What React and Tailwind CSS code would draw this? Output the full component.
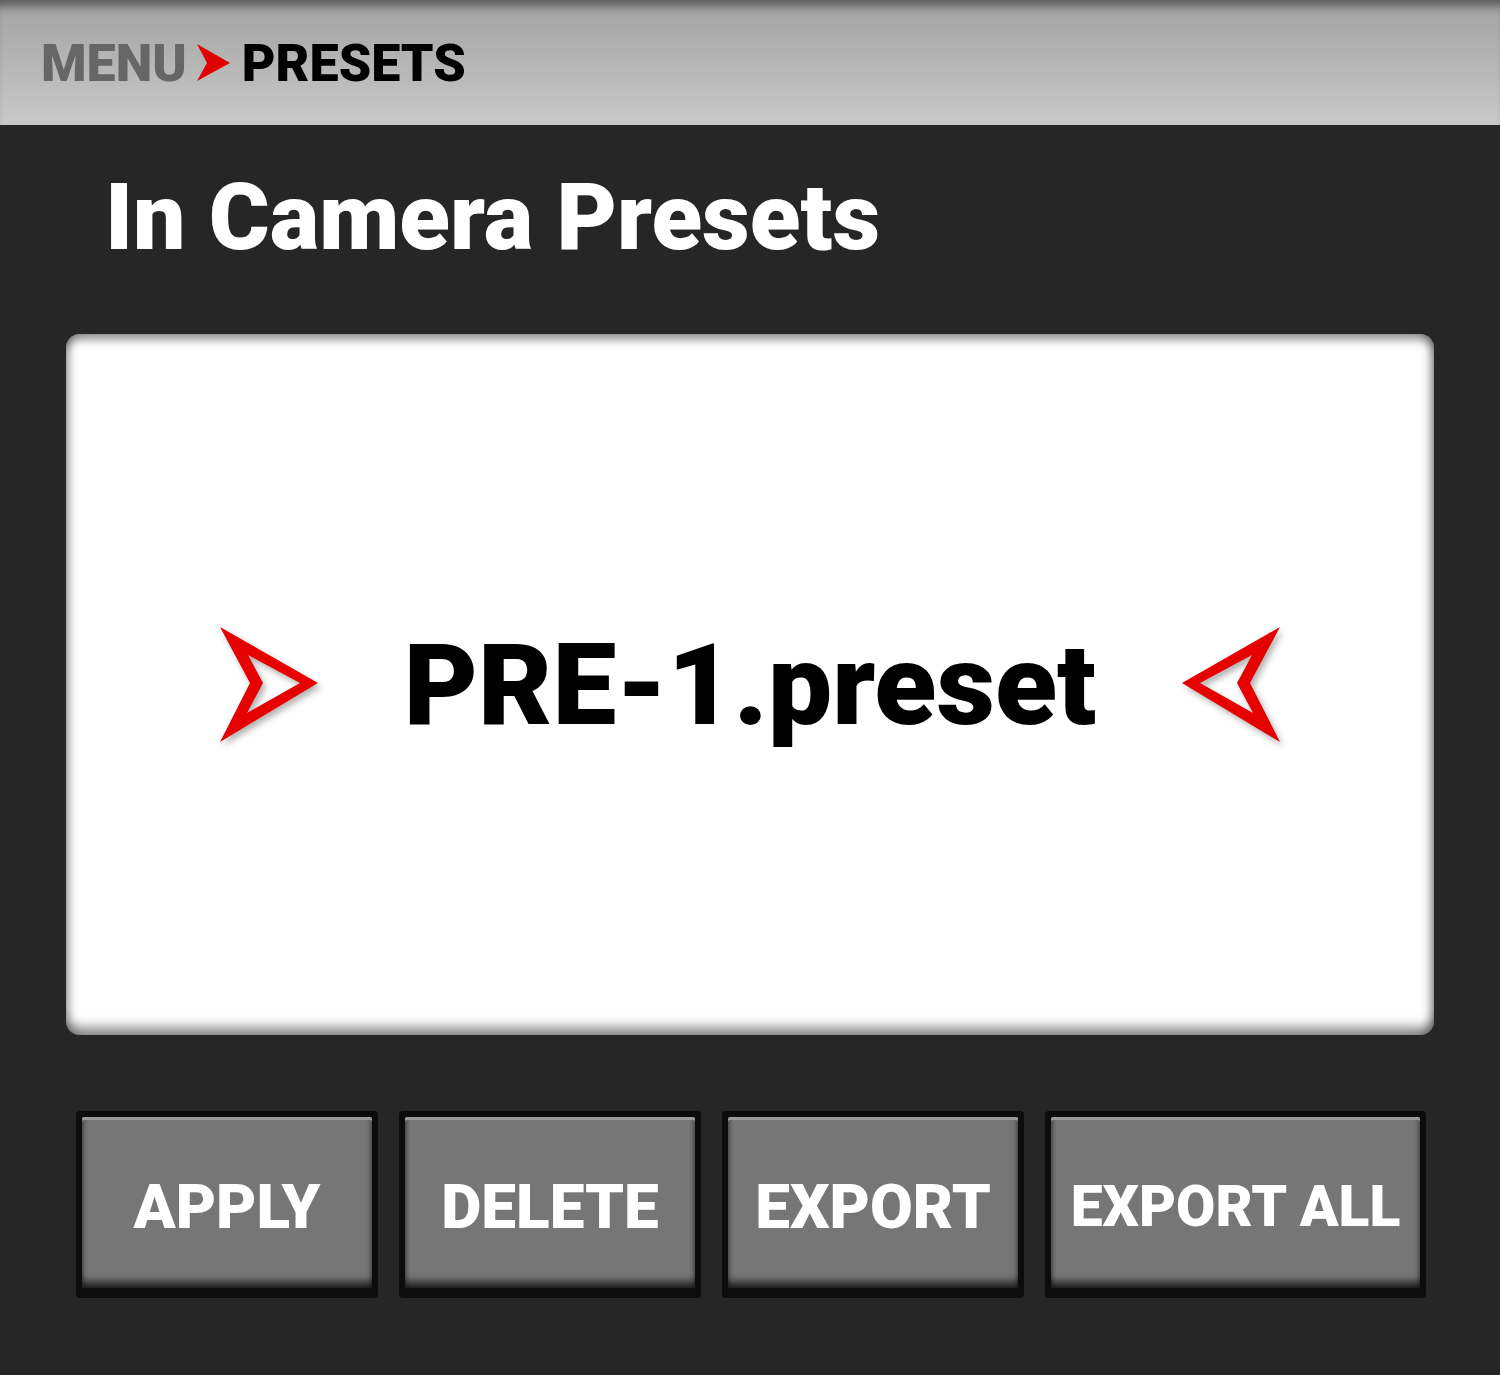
import React from "react";

const font = { fontFamily: "Roboto, 'Liberation Sans', sans-serif" };

function BigArrow({ flip }) {
  const d = flip
    ? "M100 0 L2 56 L100 115 L70 56 Z M72 28 L20 56 L73 86 L57 56 Z"
    : "M0 0 L98 56 L0 115 L30 56 Z M28 28 L80 56 L27 86 L43 56 Z";
  return (
    <svg
      width="100"
      height="116"
      viewBox="0 0 100 116"
      className="shrink-0 drop-shadow-[3px_4px_3px_rgba(0,0,0,0.3)]"
      aria-hidden
    >
      <path d={d} fill="#e60000" fillRule="evenodd" />
    </svg>
  );
}

function PanelButton({ label, wide }) {
  return (
    <div
      className={`${wide ? "w-[381px]" : "w-[302px]"} h-[187px] shrink-0 rounded-[4px] bg-[#0c0c0c] px-[6px] pt-[6px] pb-[10px]`}
    >
      <div className="flex h-full items-center justify-center rounded-[2px] bg-[#767676] pt-[8px] shadow-[inset_0_3px_0_0_#9a9a9a,inset_0_-10px_8px_-4px_rgba(0,0,0,0.75),inset_3px_0_4px_-2px_rgba(0,0,0,0.4),inset_-3px_0_4px_-2px_rgba(0,0,0,0.4)]">
        <span
          className={`${wide ? "text-[57px]" : "text-[62px]"} font-black leading-none text-white`}
        >
          {label}
        </span>
      </div>
    </div>
  );
}

export default function App() {
  return (
    <div className="flex h-[1375px] w-[1500px] flex-col bg-[#262626]" style={font}>
      <div className="flex h-[125px] shrink-0 items-start bg-gradient-to-b from-[#a2a2a2] to-[#c9c9c9] pl-[41px] pt-[38px] shadow-[inset_0_12px_10px_-6px_rgba(0,0,0,0.45)]">
        <span className="text-[52px] font-black leading-none text-[#666666]">MENU</span>
        <svg width="36" height="38" viewBox="0 0 36 38" className="ml-[9px] mt-[6px]" aria-hidden>
          <path d="M1 0 L34 19 L1 37 L11 19 Z" fill="#e00000" />
        </svg>
        <span className="ml-[10px] text-[52px] font-black leading-none text-black">PRESETS</span>
      </div>

      <h1 className="ml-[105px] mt-[46px] text-[93px] font-black leading-none text-white">
        In Camera Presets
      </h1>

      <div className="mx-[66px] mt-[70px] flex h-[701px] items-center justify-center rounded-[14px] bg-white shadow-[inset_0_10px_10px_-4px_rgba(0,0,0,0.4),inset_0_-12px_12px_-4px_rgba(0,0,0,0.45),inset_10px_0_10px_-6px_rgba(0,0,0,0.25),inset_-10px_0_10px_-6px_rgba(0,0,0,0.35)]">
        <BigArrow />
        <span className="mx-[84px] text-[114px] font-black leading-none text-black">
          PRE-1.preset
        </span>
        <BigArrow flip />
      </div>

      <div className="ml-[76px] mt-[76px] flex gap-[21px]">
        <PanelButton label="APPLY" />
        <PanelButton label="DELETE" />
        <PanelButton label="EXPORT" />
        <PanelButton label="EXPORT ALL" wide />
      </div>
    </div>
  );
}
